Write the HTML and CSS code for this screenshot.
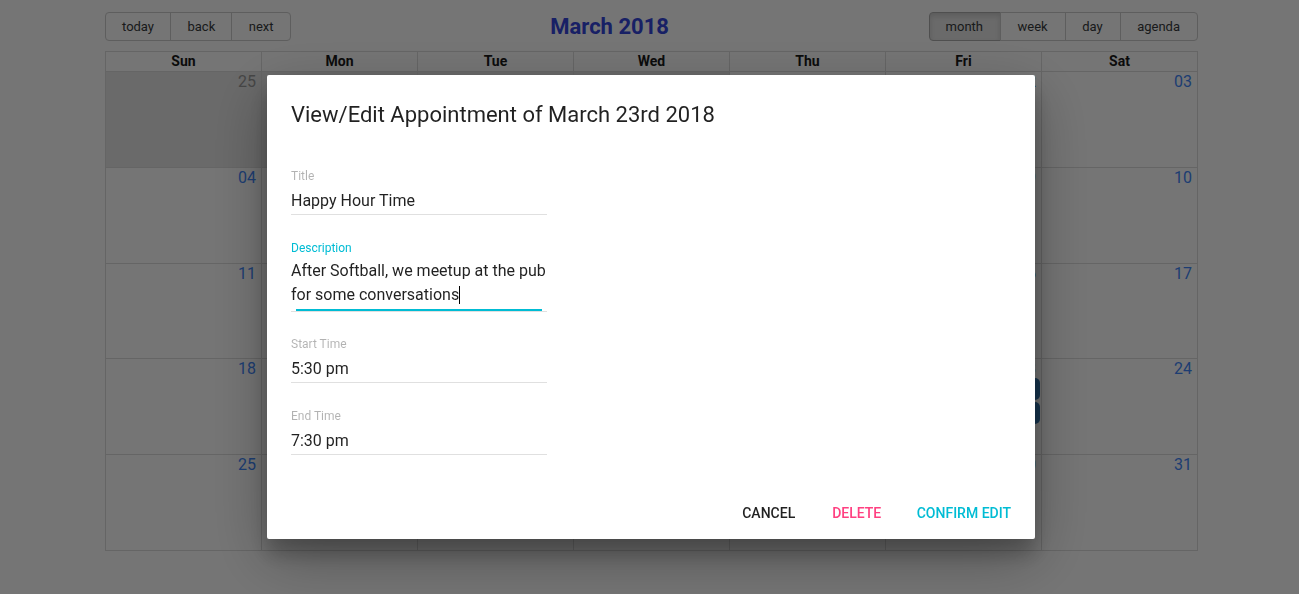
FILE: index.html
```html
<!DOCTYPE html>
<html>
<head>
<meta charset="utf-8">
<title>Calendar</title>
<link rel="stylesheet" href="styles.css">
</head>
<body>
<div class="app">
  <div class="calendar">
    <div class="toolbar">
      <div class="btn-group">
        <button class="tb-btn">today</button>
        <button class="tb-btn">back</button>
        <button class="tb-btn">next</button>
      </div>
      <div class="toolbar-label">March 2018</div>
      <div class="btn-group views">
        <button class="tb-btn active">month</button>
        <button class="tb-btn">week</button>
        <button class="tb-btn">day</button>
        <button class="tb-btn">agenda</button>
      </div>
    </div>
    <div class="month">
      <div class="month-header">
        <div class="hcell">Sun</div>
        <div class="hcell">Mon</div>
        <div class="hcell">Tue</div>
        <div class="hcell">Wed</div>
        <div class="hcell">Thu</div>
        <div class="hcell">Fri</div>
        <div class="hcell">Sat</div>
      </div>
      <div class="week">
        <div class="day off"><span class="date">25</span></div>
        <div class="day off"><span class="date">26</span></div>
        <div class="day off"><span class="date">27</span></div>
        <div class="day off"><span class="date">28</span></div>
        <div class="day"><span class="date">01</span></div>
        <div class="day"><span class="date">02</span></div>
        <div class="day"><span class="date">03</span></div>
      </div>
      <div class="week">
        <div class="day"><span class="date">04</span></div>
        <div class="day"><span class="date">05</span></div>
        <div class="day"><span class="date">06</span></div>
        <div class="day"><span class="date">07</span></div>
        <div class="day"><span class="date">08</span></div>
        <div class="day"><span class="date">09</span></div>
        <div class="day"><span class="date">10</span></div>
      </div>
      <div class="week">
        <div class="day"><span class="date">11</span></div>
        <div class="day"><span class="date">12</span></div>
        <div class="day"><span class="date">13</span></div>
        <div class="day"><span class="date">14</span></div>
        <div class="day"><span class="date">15</span></div>
        <div class="day"><span class="date">16</span></div>
        <div class="day"><span class="date">17</span></div>
      </div>
      <div class="week">
        <div class="day"><span class="date">18</span></div>
        <div class="day"><span class="date">19</span></div>
        <div class="day"><span class="date">20</span></div>
        <div class="day"><span class="date">21</span></div>
        <div class="day"><span class="date">22</span></div>
        <div class="day">
          <span class="date">23</span>
          <div class="event">Softball Game</div>
          <div class="event">Happy Hour Time</div>
        </div>
        <div class="day"><span class="date">24</span></div>
      </div>
      <div class="week">
        <div class="day"><span class="date">25</span></div>
        <div class="day"><span class="date">26</span></div>
        <div class="day"><span class="date">27</span></div>
        <div class="day"><span class="date">28</span></div>
        <div class="day"><span class="date">29</span></div>
        <div class="day"><span class="date">30</span></div>
        <div class="day"><span class="date">31</span></div>
      </div>
    </div>
  </div>
</div>

<div class="overlay">
  <div class="dialog">
    <h3 class="dialog-title">View/Edit Appointment of March 23rd 2018</h3>
    <div class="dialog-body">
      <div class="field">
        <label class="label">Title</label>
        <div class="value">Happy Hour Time</div>
      </div>
      <div class="field">
        <label class="label focused">Description</label>
        <div class="value multi">
          <span class="line">After Softball, we meetup at the pub</span>
          <span class="line">for some conversations<span class="caret"></span></span>
          <span class="focus-line"></span>
        </div>
      </div>
      <div class="field after-multi">
        <label class="label">Start Time</label>
        <div class="value">5:30 pm</div>
      </div>
      <div class="field">
        <label class="label">End Time</label>
        <div class="value">7:30 pm</div>
      </div>
    </div>
    <div class="actions">
      <button class="flat-btn cancel">Cancel</button>
      <button class="flat-btn delete">Delete</button>
      <button class="flat-btn confirm">Confirm Edit</button>
    </div>
  </div>
</div>
</body>
</html>
```

FILE: styles.css
```css
* {
  box-sizing: border-box;
}

html, body {
  margin: 0;
  padding: 0;
  background: #ffffff;
  font-family: Roboto, "Liberation Sans", Arial, sans-serif;
}

.app {
  padding: 12px 0 0 105px;
}

.calendar {
  width: 1093px;
  display: flex;
  flex-direction: column;
  color: #373a3c;
}

/* Toolbar */
.toolbar {
  display: flex;
  align-items: center;
  margin-bottom: 10px;
}

.btn-group {
  display: flex;
}

.tb-btn {
  font-family: Roboto, "Liberation Sans", Arial, sans-serif;
  font-size: 13px;
  line-height: 15px;
  color: #373a3c;
  background: none;
  border: 1px solid #ccc;
  padding: 6px 16px;
  margin: 0;
  border-radius: 0;
  height: 29px;
}

.tb-btn + .tb-btn {
  margin-left: -1px;
  padding-left: 16.5px;
}

.views .tb-btn {
  padding-right: 17px;
}

.tb-btn:first-child {
  border-radius: 4px 0 0 4px;
}

.tb-btn:last-child {
  border-radius: 0 4px 4px 0;
}

.tb-btn.active {
  background: #e6e6e6;
  border-color: #adadad;
  box-shadow: inset 0 3px 5px rgba(0, 0, 0, 0.125);
}

.toolbar-label {
  flex: 1;
  text-align: center;
  font-size: 22px;
  font-weight: 700;
  color: #3546dc;
  padding: 0 10px;
}

/* Month grid */
.month {
  height: 500px;
  border: 1px solid #ddd;
  display: flex;
  flex-direction: column;
}

.month-header {
  display: flex;
  height: 20px;
  border-bottom: 1px solid #ddd;
}

.hcell {
  flex: 1 1 0;
  text-align: center;
  font-size: 14px;
  font-weight: 700;
  line-height: 19px;
  color: #1a1a1a;
}

.hcell + .hcell {
  border-left: 1px solid #ddd;
}

.week {
  flex: 1 1 0;
  display: flex;
  min-height: 0;
}

.week + .week {
  border-top: 1px solid #ddd;
}

.day {
  flex: 1 1 0;
  display: flex;
  flex-direction: column;
  min-width: 0;
}

.day + .day {
  border-left: 1px solid #ddd;
}

.day.off {
  background: #e6e6e6;
}

.date {
  display: block;
  text-align: right;
  padding-right: 5px;
  font-size: 16px;
  line-height: 19px;
  color: #3f86f8;
}

.day.off .date {
  color: #999;
}

.event {
  height: 22px;
  margin: 0 1px 2px 2px;
  padding: 2px 5px;
  background: #3174ad;
  color: #fff;
  border-radius: 5px;
  font-size: 14px;
  line-height: 18px;
  white-space: nowrap;
  overflow: hidden;
}

/* Overlay + dialog */
.overlay {
  position: fixed;
  inset: 0;
  background: rgba(0, 0, 0, 0.54);
  display: flex;
  justify-content: center;
  align-items: flex-start;
  padding: 75px 0 0 3px;
}

.dialog {
  width: 768px;
  background: #fff;
  border-radius: 2px;
  box-shadow: 0 19px 60px rgba(0, 0, 0, 0.3), 0 15px 20px rgba(0, 0, 0, 0.22);
  display: flex;
  flex-direction: column;
}

.dialog-title {
  margin: 0;
  padding: 24px 24px 20px;
  font-size: 22px;
  line-height: 32px;
  font-weight: 400;
  color: rgba(0, 0, 0, 0.87);
}

.dialog-body {
  padding: 18px 24px 32px;
  display: flex;
  flex-direction: column;
}

.field {
  width: 256px;
  display: flex;
  flex-direction: column;
}

.field + .field {
  margin-top: 26px;
}

.field.after-multi {
  margin-top: 25px;
}

.label {
  font-size: 12px;
  line-height: 14px;
  color: rgba(0, 0, 0, 0.3);
}

.label.focused {
  color: #00bcd4;
}

.value {
  position: relative;
  margin-top: 6px;
  padding-bottom: 1px;
  font-size: 16px;
  line-height: 24px;
  color: rgba(0, 0, 0, 0.87);
  border-bottom: 1px solid #e0e0e0;
}

.value.multi {
  margin-top: 4px;
  padding-bottom: 4px;
}

.line {
  display: block;
  white-space: nowrap;
}

.caret {
  display: inline-block;
  width: 1px;
  height: 18px;
  background: #000;
  vertical-align: -4px;
}

.focus-line {
  position: absolute;
  left: 5px;
  right: 5px;
  bottom: 0;
  height: 2px;
  background: #00bcd4;
}

.actions {
  display: flex;
  justify-content: flex-end;
  padding: 8px;
}

.flat-btn {
  height: 36px;
  min-width: 88px;
  padding: 0 16px;
  margin: 0;
  border: 0;
  background: none;
  font-family: Roboto, "Liberation Sans", Arial, sans-serif;
  font-size: 14px;
  font-weight: 500;
  text-transform: uppercase;
  border-radius: 2px;
}

.flat-btn.cancel {
  color: rgba(0, 0, 0, 0.87);
}

.flat-btn.delete {
  color: #ff4081;
}

.flat-btn.confirm {
  color: #00bcd4;
}
```
